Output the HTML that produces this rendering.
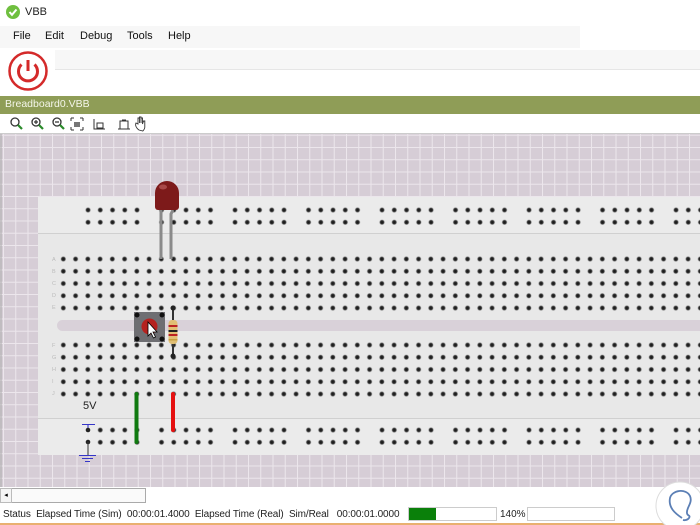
<!DOCTYPE html>
<html><head><meta charset="utf-8"><style>
*{margin:0;padding:0;box-sizing:border-box}
body{width:700px;height:525px;overflow:hidden;background:#fff;font-family:"Liberation Sans",sans-serif;position:relative}
.a{position:absolute}
</style></head><body>
<div class="a" style="left:0;top:0;width:700px;height:25px;background:#fff"></div>
<svg class="a" style="left:6px;top:5px" width="14" height="14"><circle cx="7" cy="7" r="7" fill="#6fbf3f"/><path d="M3.5 7 L6 9.8 L10.5 4.5" stroke="#fff" stroke-width="2" fill="none"/></svg>
<div class="a" style="left:25px;top:6px;font-size:11px;color:#222">VBB</div>
<div class="a" style="left:0;top:26px;width:580px;height:22px;background:#f7f7f7"></div>
<div class="a" style="top:30px;left:13px;font-size:11px;color:#111">File</div>
<div class="a" style="top:30px;left:45px;font-size:11px;color:#111">Edit</div>
<div class="a" style="top:30px;left:80px;font-size:11px;color:#111">Debug</div>
<div class="a" style="top:30px;left:127px;font-size:11px;color:#111">Tools</div>
<div class="a" style="top:30px;left:168px;font-size:11px;color:#111">Help</div>
<div class="a" style="left:0;top:48px;width:700px;height:47px;background:#fff"></div>
<div class="a" style="left:55px;top:50px;width:645px;height:20px;background:#f7f7f7;border-bottom:1px solid #e6e6e6"></div>
<svg class="a" style="left:7px;top:50px" width="44" height="44"><circle cx="21" cy="21" r="18.5" fill="#fff" stroke="#d42a2a" stroke-width="2.5"/><path d="M14.5 14.5 A9.5 9.5 0 1 0 27.5 14.5" stroke="#d42a2a" stroke-width="3" fill="none"/><line x1="21" y1="10" x2="21" y2="21" stroke="#d42a2a" stroke-width="3"/></svg>
<div class="a" style="left:0;top:96px;width:700px;height:18px;background:#8f9d57"></div>
<div class="a" style="left:5px;top:98px;font-size:10.5px;color:#f4f6ea">Breadboard0.VBB</div>
<div class="a" style="left:0;top:114px;width:700px;height:20px;background:#fff;border-bottom:1px solid #ccc"></div>
<svg class="a" style="left:8px;top:116px" width="140" height="16">
<g stroke="#333" fill="none" stroke-width="1.3"><circle cx="7" cy="6" r="4"/><circle cx="28" cy="6" r="4"/><circle cx="49" cy="6" r="4"/></g>
<g stroke="#2a8a2a" stroke-width="2.2"><line x1="10" y1="9" x2="14" y2="13"/><line x1="31" y1="9" x2="35" y2="13"/><line x1="52" y1="9" x2="56" y2="13"/></g>
<path d="M26 6h4M28 4v4M47 6h4" stroke="#333" stroke-width="1.2"/>
<path d="M63 2h3M63 2v3M75 2h-3M75 2v3M63 14h3M63 14v-3M75 14h-3M75 14v-3" stroke="#333" fill="none"/>
<rect x="66" y="6" width="6" height="5" fill="#777"/>
<path d="M86 3v10h11M89 7h6v5h-6z" stroke="#333" fill="none"/>
<path d="M110 13h12M112 13v-8h8v8M114 4h4" stroke="#333" fill="none"/>
<path d="M131 14c-3-2-4-5-3-7l2 1v-6h1.5v5v-6h1.5v6v-5h1.5v6l1-3h1.3v6c0 2-1 3-2 4z" stroke="#333" fill="#fff" stroke-width="0.9"/>
</svg>
<svg class="a" style="left:0;top:134px" width="700" height="353" viewBox="0 134 700 353">
<defs>
<pattern id="g" x="3" y="0" width="12.25" height="12.25" patternUnits="userSpaceOnUse"><rect width="12.25" height="12.25" fill="#d6cdd6"/><path d="M0 0.5H12.25M0.5 0V12.25" stroke="#ece6ec" stroke-width="1"/></pattern>
<radialGradient id="h"><stop offset="0" stop-color="#111"/><stop offset="0.6" stop-color="#333"/><stop offset="1" stop-color="#999" stop-opacity="0"/></radialGradient>
<pattern id="row1" x="57.2" y="252.9" width="12.25" height="12.25" patternUnits="userSpaceOnUse"><circle cx="6.12" cy="6.12" r="3" fill="url(#h)"/></pattern>
<pattern id="row2" x="57.2" y="338.9" width="12.25" height="12.25" patternUnits="userSpaceOnUse"><circle cx="6.12" cy="6.12" r="3" fill="url(#h)"/></pattern>
<g id="five" fill="url(#h)"><circle cx="6.12" cy="6.12" r="3"/><circle cx="18.37" cy="6.12" r="3"/><circle cx="30.62" cy="6.12" r="3"/><circle cx="42.87" cy="6.12" r="3"/><circle cx="55.12" cy="6.12" r="3"/></g>
<pattern id="rail1" x="81.9" y="203.9" width="73.5" height="12.25" patternUnits="userSpaceOnUse"><use href="#five"/></pattern>
<pattern id="rail2" x="81.9" y="423.9" width="73.5" height="12.25" patternUnits="userSpaceOnUse"><use href="#five"/></pattern>
</defs>
<rect x="0" y="134" width="700" height="353" fill="url(#g)"/>
<line x1="1" y1="134" x2="1" y2="487" stroke="#aaa"/>
<rect x="38" y="197" width="662" height="258" fill="#e8e8e8"/>
<rect x="38" y="197" width="662" height="36" fill="#ebebeb"/>
<line x1="38" y1="233.5" x2="700" y2="233.5" stroke="#d0d0d0"/>
<line x1="38" y1="418.5" x2="700" y2="418.5" stroke="#d0d0d0"/>
<rect x="38" y="419" width="662" height="36" fill="#ebebeb"/>
<rect x="57" y="320" width="660" height="11" rx="5.5" fill="#d9d1d9"/>
<rect x="80" y="204" width="620" height="24.5" fill="url(#rail1)"/>
<rect x="80" y="424" width="620" height="24.5" fill="url(#rail2)"/>
<rect x="57" y="253" width="643" height="61" fill="url(#row1)"/>
<rect x="57" y="339" width="643" height="61" fill="url(#row2)"/>
<g font-size="5.5" fill="#bbb" font-family="Liberation Sans"><text x="52" y="261">A</text><text x="52" y="273">B</text><text x="52" y="285">C</text><text x="52" y="297">D</text><text x="52" y="309">E</text><text x="52" y="347">F</text><text x="52" y="359">G</text><text x="52" y="371">H</text><text x="52" y="383">I</text><text x="52" y="395">J</text></g>
<path d="M161 205v54M173 210l-2 4v45" stroke="#8a8a8a" stroke-width="3" fill="none"/>
<path d="M155 193a12 12 0 0 1 24 0v14a3 3 0 0 1-3 3h-18a3 3 0 0 1-3-3z" fill="#7d1a1a"/>
<ellipse cx="163" cy="187" rx="4" ry="2.5" fill="#a84848"/>
<rect x="134" y="312" width="31" height="30" fill="#6e6e72"/>
<g fill="#111"><circle cx="137" cy="315" r="2.5"/><circle cx="162" cy="315" r="2.5"/><circle cx="137" cy="339" r="2.5"/><circle cx="162" cy="339" r="2.5"/></g>
<circle cx="149.5" cy="326.5" r="8" fill="#b5221f"/>
<path d="M148 322v14l3-3 2.5 5 2-1-2.5-5h4z" fill="#fff" stroke="#000" stroke-width="0.8"/>
<line x1="173" y1="308" x2="173" y2="356" stroke="#333" stroke-width="2"/>
<circle cx="173" cy="308" r="2.5" fill="#222"/><circle cx="173" cy="356" r="2.5" fill="#222"/>
<rect x="168.5" y="320" width="9" height="24" rx="3.5" fill="#e1bf74"/>
<rect x="168.5" y="325" width="9" height="2" fill="#b22"/><rect x="168.5" y="330" width="9" height="2" fill="#222"/><rect x="168.5" y="334" width="9" height="2" fill="#b22"/><rect x="168.5" y="339" width="9" height="1.5" fill="#c9a040"/>
<line x1="136.5" y1="394" x2="136.5" y2="442" stroke="#107a10" stroke-width="4" stroke-linecap="round"/>
<line x1="173" y1="394" x2="173" y2="430" stroke="#e51010" stroke-width="4" stroke-linecap="round"/>
<text x="83" y="409" font-size="11" fill="#222" font-family="Liberation Sans">5V</text>
<rect x="82" y="426" width="12" height="22" fill="#ebebeb"/>
<path d="M82 424.5h13M88 425v6" stroke="#3535c8" stroke-width="1.1"/>
<circle cx="88" cy="430" r="2.3" fill="#222"/><circle cx="88" cy="442" r="2.3" fill="#222"/>
<path d="M88 442v13" stroke="#333"/>
<path d="M79 455.5h17M82 458.5h11M85 461.5h5" stroke="#3535c8" stroke-width="1.1"/>
</svg>
<div class="a" style="left:0;top:487px;width:700px;height:18px;background:#fff"></div>
<div class="a" style="left:0;top:488px;width:12px;height:15px;border:1px solid #bbb;background:#f5f5f5;font-size:7px;line-height:13px;text-align:center">◂</div>
<div class="a" style="left:12px;top:488px;width:134px;height:15px;border:1px solid #aaa;border-left:none;background:#fafafa"></div>
<div class="a" style="left:0;top:505px;width:700px;height:20px;background:#fff;border-bottom:2px solid #e9b070"></div>
<div class="a" style="left:3px;top:509px;font-size:10px;color:#222;white-space:nowrap;letter-spacing:-0.1px">Status&nbsp; Elapsed Time (Sim)&nbsp; 00:00:01.4000&nbsp; Elapsed Time (Real)&nbsp; Sim/Real&nbsp;&nbsp; 00:00:01.0000</div>
<div class="a" style="left:408px;top:507px;width:89px;height:14px;border:1px solid #ccc;background:#fff"></div>
<div class="a" style="left:409px;top:508px;width:27px;height:12px;background:#0a800a"></div>
<div class="a" style="left:500px;top:509px;font-size:10px;color:#222">140%</div>
<div class="a" style="left:527px;top:507px;width:88px;height:14px;border:1px solid #ccc;background:#fff"></div>
<svg class="a" style="left:652px;top:478px" width="48" height="47"><circle cx="28" cy="28" r="24" fill="#fff" stroke="#ddd"/><path d="M30 40c-6-4-14-10-12-20 2-8 16-10 20-2 3 7-4 12-3 17 0 3 4 2 2 5-2 3-6 2-6 2" stroke="#5b7fb5" stroke-width="1.8" fill="none"/></svg>
</body></html>
